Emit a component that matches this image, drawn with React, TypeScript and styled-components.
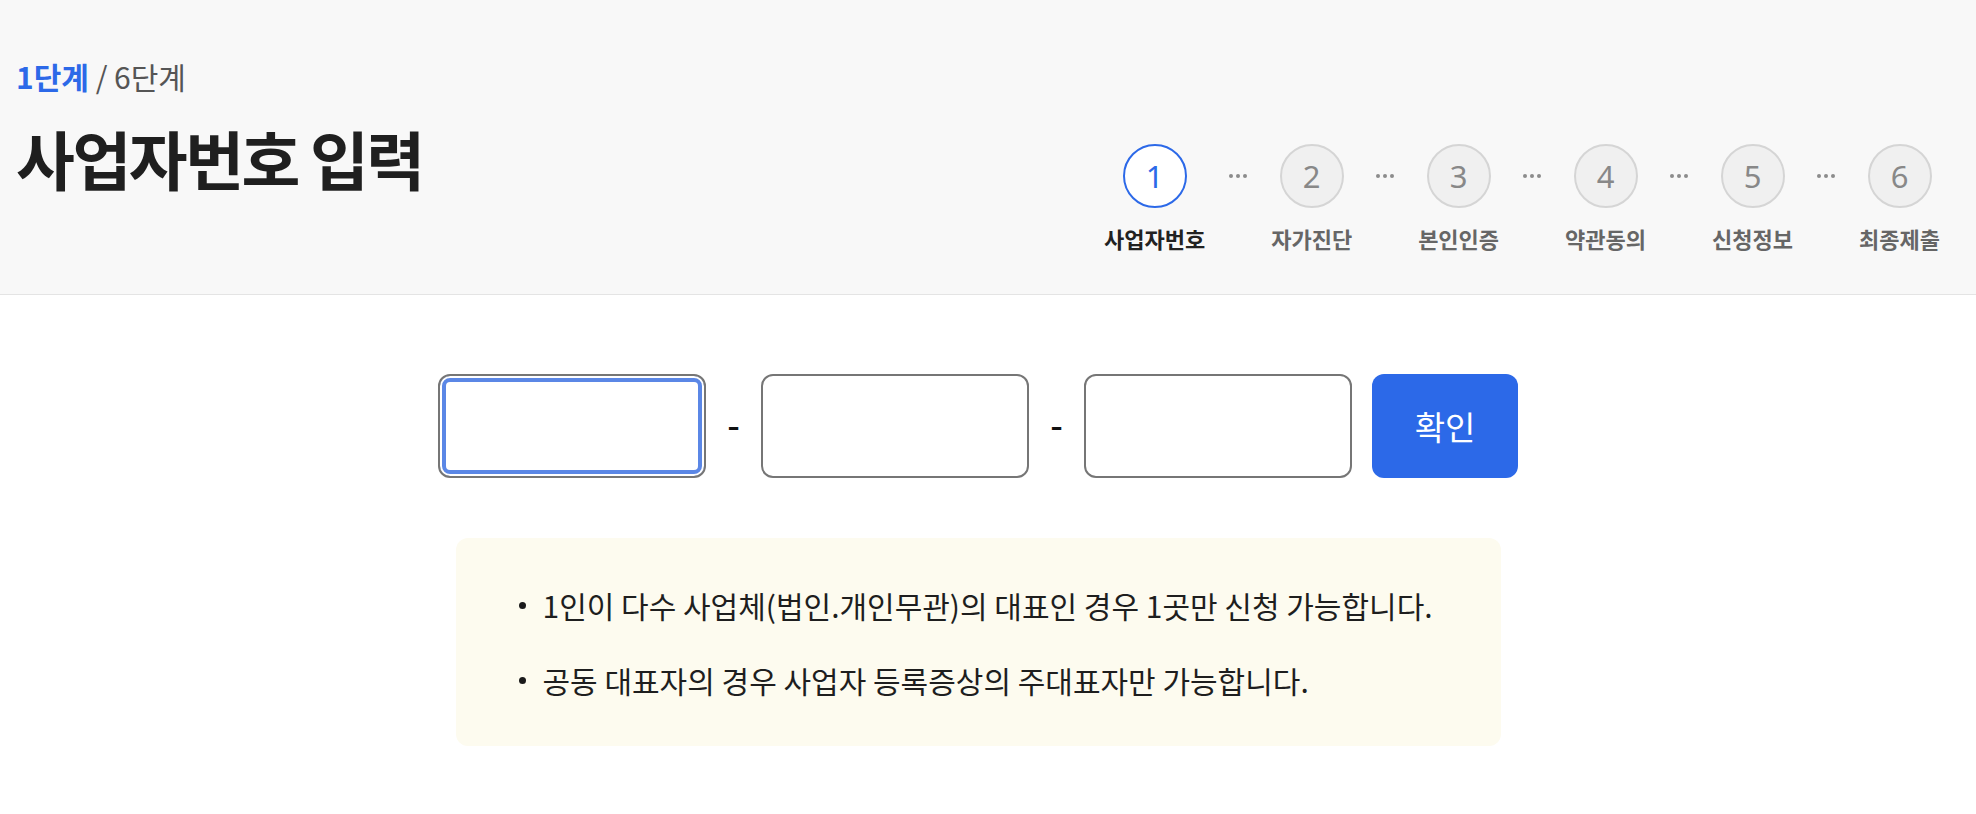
import styled, { createGlobalStyle } from 'styled-components';

const GlobalStyle = createGlobalStyle`
  * { box-sizing: border-box; }
  body {
    margin: 0;
    background: #ffffff;
    font-family: 'Noto Sans CJK KR', 'Noto Sans', sans-serif;
    color: #1e1e1e;
  }
`;

const S = {
  Header: styled.header`
    display: flex;
    justify-content: space-between;
    min-height: 295px;
    background-color: #f8f8f8;
    border-bottom: 1px solid #e4e4e4;
    padding: 56px 36px 41px 16px;
  `,

  TitleBlock: styled.div`
    display: flex;
    flex-direction: column;
  `,

  StepCount: styled.div`
    font-size: 30px;
    line-height: 40px;
    color: #555555;
  `,

  Current: styled.span`
    color: #2c69e8;
    font-weight: 700;
  `,

  Title: styled.h1`
    margin: 21px 0 0;
    font-size: 64px;
    line-height: 80px;
    font-weight: 700;
    letter-spacing: -2.5px;
    color: #1f1f1f;
  `,

  Steps: styled.ol`
    display: flex;
    align-items: flex-start;
    align-self: flex-end;
    margin: 0;
    padding: 0;
    list-style: none;
  `,

  Step: styled.li`
    display: flex;
    flex-direction: column;
    align-items: center;
    gap: 15px;
  `,

  Circle: styled.span<{ $active: boolean }>`
    display: flex;
    align-items: center;
    justify-content: center;
    width: 64px;
    height: 64px;
    border-radius: 50%;
    border: 2px solid ${({ $active }) => ($active ? '#2c69e8' : '#d5d5d5')};
    background-color: ${({ $active }) => ($active ? '#ffffff' : '#f0f0f0')};
    color: ${({ $active }) => ($active ? '#2c69e8' : '#888888')};
    font-family: 'Noto Sans', sans-serif;
    font-size: 31px;
  `,

  StepLabel: styled.span<{ $active: boolean }>`
    font-size: 22px;
    line-height: 30px;
    font-weight: 700;
    white-space: nowrap;
    color: ${({ $active }) => ($active ? '#222222' : '#666666')};
  `,

  Separator: styled.li`
    display: flex;
    align-items: center;
    justify-content: center;
    gap: 3px;
    width: 66px;
    height: 64px;
  `,

  Dot: styled.span`
    width: 4px;
    height: 4px;
    border-radius: 50%;
    background-color: #8c8c8c;
  `,

  Main: styled.main`
    display: flex;
    flex-direction: column;
    align-items: center;
    padding: 79px 20px 60px 0;
  `,

  InputRow: styled.div`
    display: flex;
    align-items: center;
    gap: 20px;
  `,

  NumberInput: styled.input`
    width: 268px;
    height: 104px;
    border: 2px solid #767676;
    border-radius: 12px;
    background: #ffffff;
    font-family: inherit;
    font-size: 30px;
    padding: 0 16px;
    outline: none;

    &:focus {
      box-shadow: inset 0 0 0 2px #ffffff, inset 0 0 0 6px #5b87e6;
    }
  `,

  Dash: styled.span`
    width: 15px;
    text-align: center;
    font-family: 'Liberation Sans', sans-serif;
    font-size: 38px;
    color: #111111;
  `,

  ConfirmButton: styled.button`
    width: 146px;
    height: 104px;
    border: none;
    border-radius: 12px;
    background-color: #2c69e8;
    color: #ffffff;
    font-family: inherit;
    font-size: 33px;
    cursor: pointer;
  `,

  Notice: styled.ul`
    width: 1045px;
    margin: 60px 0 0;
    padding: 45px 52px 44px 63px;
    border-radius: 12px;
    background-color: #fdfbef;
    list-style: none;
    display: flex;
    flex-direction: column;
    gap: 31px;
  `,

  NoticeItem: styled.li`
    display: flex;
    align-items: center;
    gap: 17px;
    font-size: 30px;
    line-height: 44px;
    color: #1e1e1e;

    &::before {
      content: '';
      flex: 0 0 7px;
      height: 7px;
      border-radius: 50%;
      background-color: #1a1a1a;
    }
  `,
};

const steps = ['사업자번호', '자가진단', '본인인증', '약관동의', '신청정보', '최종제출'];
const current = 1;

const notices = [
  '1인이 다수 사업체(법인.개인무관)의 대표인 경우 1곳만 신청 가능합니다.',
  '공동 대표자의 경우 사업자 등록증상의 주대표자만 가능합니다.',
];

const App = () => {
  return (
    <>
      <GlobalStyle />
      <S.Header>
        <S.TitleBlock>
          <S.StepCount>
            <S.Current>{current}단계</S.Current> / {steps.length}단계
          </S.StepCount>
          <S.Title>사업자번호 입력</S.Title>
        </S.TitleBlock>
        <S.Steps>
          {steps.map((label, i) => {
            const active = i + 1 === current;
            return [
              i > 0 && (
                <S.Separator key={`sep-${i}`} aria-hidden>
                  <S.Dot />
                  <S.Dot />
                  <S.Dot />
                </S.Separator>
              ),
              <S.Step key={label}>
                <S.Circle $active={active}>{i + 1}</S.Circle>
                <S.StepLabel $active={active}>{label}</S.StepLabel>
              </S.Step>,
            ];
          })}
        </S.Steps>
      </S.Header>
      <S.Main>
        <S.InputRow>
          <S.NumberInput autoFocus aria-label='사업자번호 앞자리' maxLength={3} />
          <S.Dash>-</S.Dash>
          <S.NumberInput aria-label='사업자번호 가운데자리' maxLength={2} />
          <S.Dash>-</S.Dash>
          <S.NumberInput aria-label='사업자번호 끝자리' maxLength={5} />
          <S.ConfirmButton type='button'>확인</S.ConfirmButton>
        </S.InputRow>
        <S.Notice>
          {notices.map((text) => (
            <S.NoticeItem key={text}>{text}</S.NoticeItem>
          ))}
        </S.Notice>
      </S.Main>
    </>
  );
};

export default App;
